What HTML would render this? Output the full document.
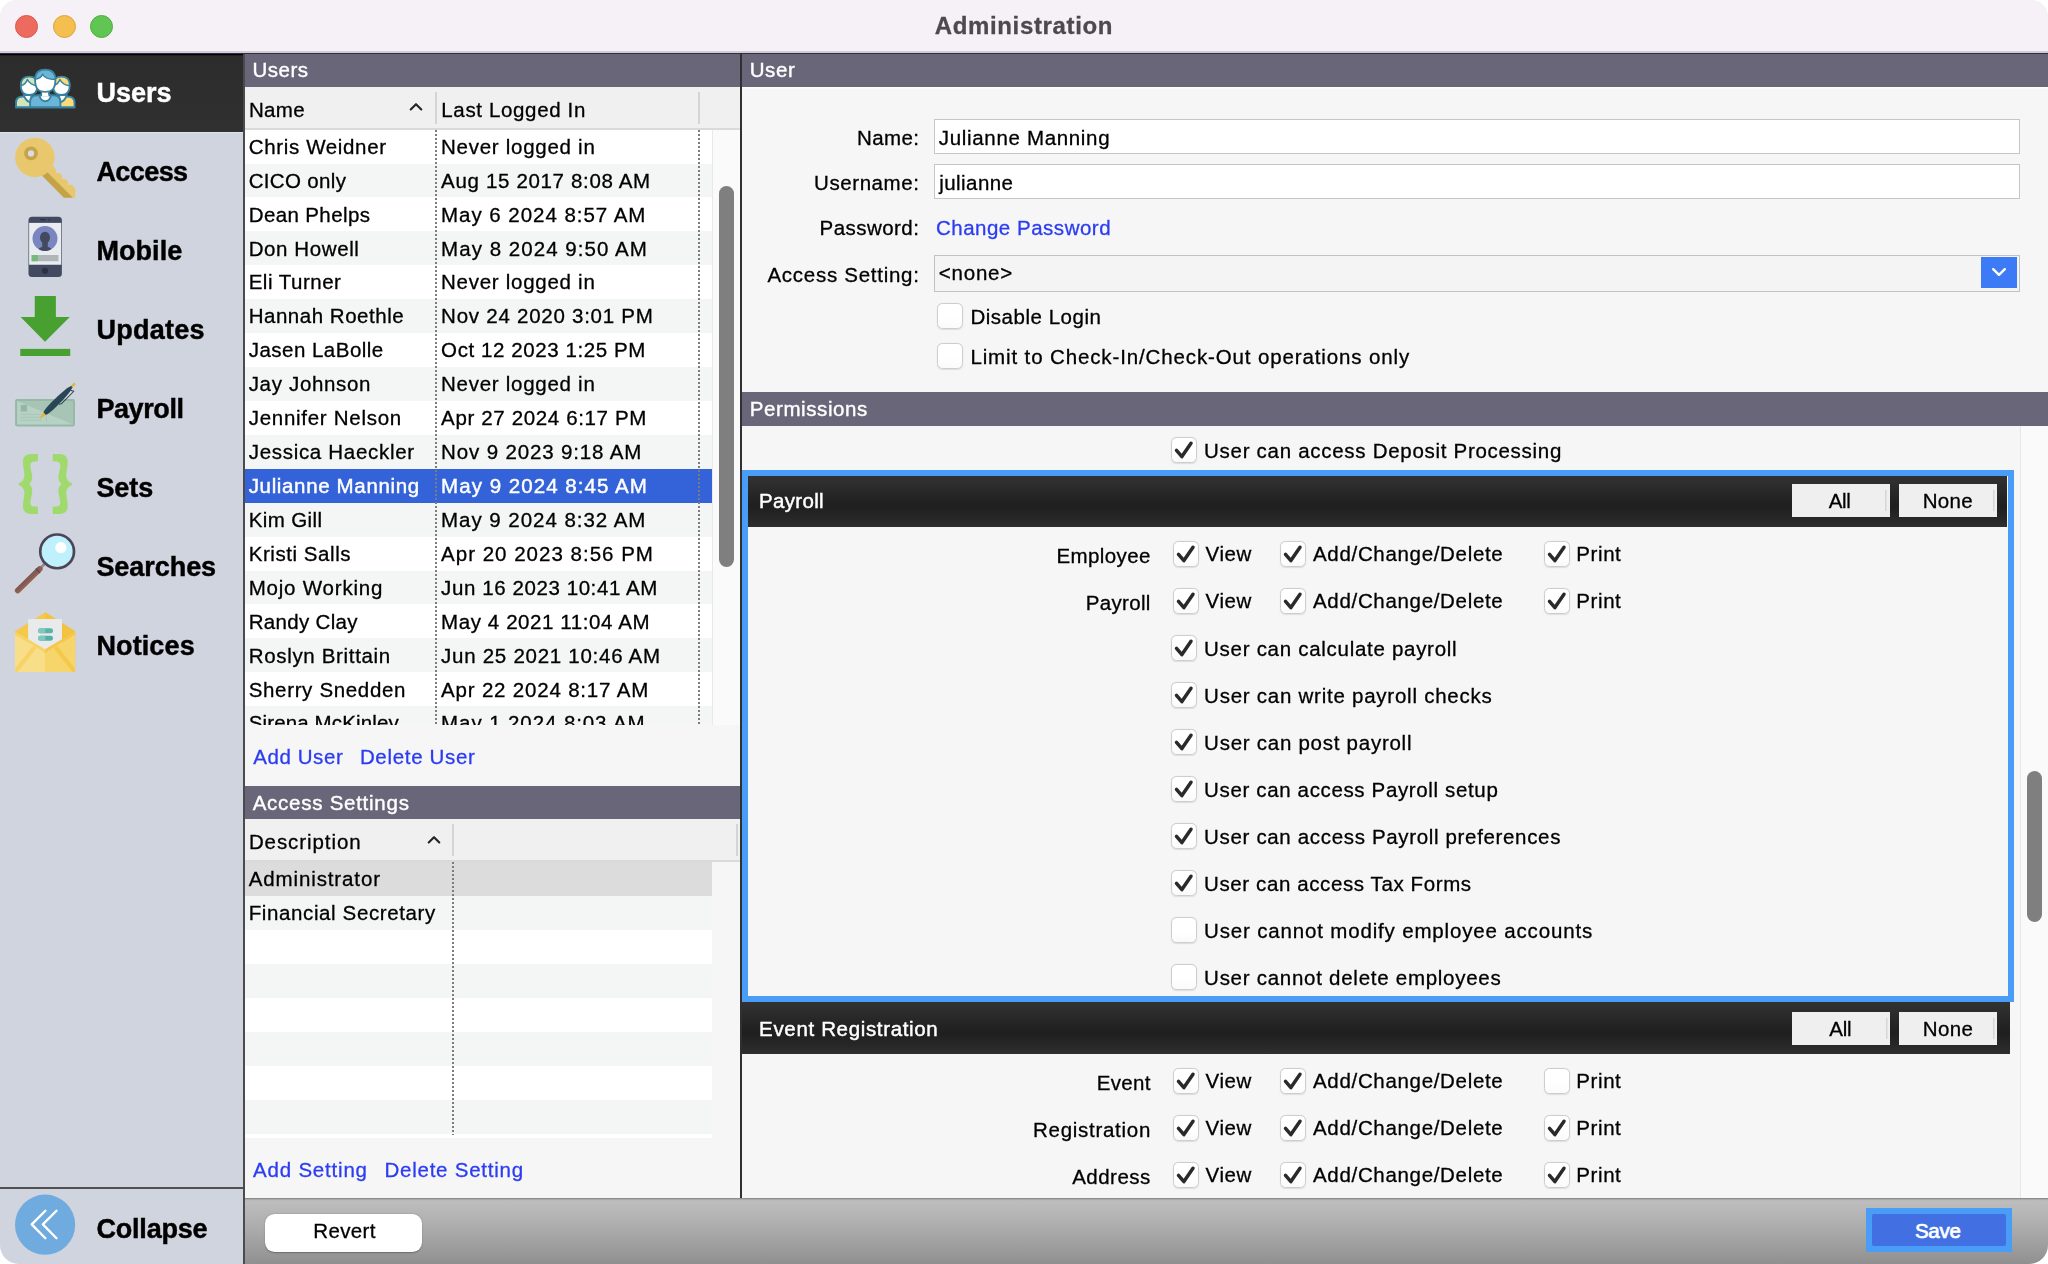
<!DOCTYPE html>
<html lang="en"><head><meta charset="utf-8"><title>Administration</title>
<style>
html,body{margin:0;padding:0;background:#fff;}
body{width:2048px;height:1264px;overflow:hidden;font-family:"Liberation Sans",Arial,sans-serif;color:#000;font-size:20.5px;-webkit-text-stroke:0.3px;}
#win{transform:translateZ(0);position:absolute;left:0;top:0;width:2048px;height:1264px;background:#f6f6f6;border-radius:17px 17px 19px 19px;overflow:hidden;}
#win *{box-sizing:border-box;}
#win div,#win span,#win i,#win b{position:absolute;white-space:nowrap;font-style:normal;}
#titlebar{left:0;top:0;width:2048px;height:53px;background:#f6f1f7;}
.tl{top:14.9px;width:23px;height:23px;border-radius:50%;}
.tl.r{left:15px;background:#ec6a5e;border:1px solid #d8584c;}
.tl.y{left:52.7px;background:#f4bf4f;border:1px solid #dba53e;}
.tl.g{left:90.1px;background:#61c554;border:1px solid #50ad43;}
#title{-webkit-text-stroke:0.3px;top:0;height:52px;line-height:51.5px;font-weight:bold;font-size:24px;color:#4c4a4d;}
#tshadow{left:0;top:50.8px;width:2048px;height:3px;background:linear-gradient(#d3cfd5 0,#d0ccd2 1.8px,#2f2d47 1.9px,#2f2d47 3px);z-index:5;}

#sidebar{left:0;top:53px;width:244.5px;height:1211px;background:#d0d4de;border-right:2px solid #4b4b4e;}
.sbitem{left:0;width:242.5px;height:79px;}
.sbitem.sel{background:linear-gradient(#000 0,#000 2.2px,#2c2c2c 2.6px,#303030 100%);color:#fff;box-shadow:0 1px 0 #dde2ed;}
.sblabel{-webkit-text-stroke:0.45px;top:0;height:79px;line-height:80px;font-weight:bold;font-size:27px;}
.sbitem svg,#collapse svg{position:absolute;}
#sbline{left:0;top:1134px;width:243px;height:1.5px;background:#505052;}
#collapse{left:0;top:1136px;width:242px;height:75px;}
#collapse .sblabel{line-height:81.5px;}

#left{left:245px;top:53px;width:495px;height:1145px;background:#f6f6f6;}
.phdr{left:0;width:100%;height:33.5px;background:#686678;color:#fff;box-shadow:0 1.5px 0 #fdfdfd;}
.phdr span{top:0;line-height:34px;-webkit-text-stroke:0.4px;}
.thead{left:0;width:100%;height:43px;background:#f0f0f0;border-bottom:2px solid #dadada;}
.th{top:0;line-height:45px;}
.hsep{top:5.3px;width:1.8px;height:32px;background:#d4d4d4;}
.thead svg{position:absolute;}
#ulist{left:0;top:77px;width:467px;height:595px;overflow:hidden;background:#fff;}
#alist{left:0;top:809.2px;width:467px;height:275.8px;overflow:hidden;background:#fff;}
.row{left:0;width:467px;height:33.92px;background:#fff;}
.row.alt{background:#f4f5f5;}
.row.sel{background:#3462d8;color:#fff;-webkit-text-stroke:0.45px;}
.row.gsel{background:#dcdcdc;}
.row span{top:0.2px;line-height:33.92px;}
.vdot{top:0;width:2px;height:100%;background-image:linear-gradient(#7c7c7c 50%,rgba(255,255,255,0) 50%);background-size:2px 4px;}
.sbar{left:467px;width:28px;background:#fafafa;border-left:1px solid #e9e9e9;}
.thumb{left:6px;width:15px;border-radius:7.5px;background:#7f7f7f;}
.links{left:0;height:26px;width:100%;color:#2b3cf2;}
.links span{top:0;line-height:26px;}

#vsplit{left:740px;top:53px;width:2px;height:1145px;background:#303030;}

#right{left:742px;top:53px;width:1306px;height:1145px;background:#f6f6f6;}
.frow{left:0;width:100%;height:26px;}
.frow span{top:0;line-height:26px;}
.lnk{color:#2b3cf2;}
.finput{left:192px;width:1085.8px;height:35.4px;background:#fff;border:1.7px solid #c6c6c6;}
.finput span{top:0.9px;line-height:34px;}
.fselect{left:192px;width:1085.8px;height:37px;background:#f4f4f4;border:1.7px solid #c2c2c2;}
.fselect span{top:0.7px;line-height:33px;}
.ddbtn{right:1.6px;top:1.6px;width:36px;height:30.4px;background:#3d7bf6;}
.ddbtn svg{position:absolute;left:7px;top:8px;}
.fcheck{left:195px;height:26px;width:800px;}
.cb{left:0;top:0;width:26px;height:26px;border-radius:5.5px;background:linear-gradient(#fff 55%,#fafafa);border:1.2px solid #cdcdcd;box-shadow:0 0.6px 1.2px rgba(0,0,0,.10);}
.cb svg{position:absolute;left:-1.2px;top:-1.2px;}
.fcheck span{top:0.5px;line-height:26px;}

#perm{left:0;top:373px;width:1278px;height:772px;overflow:hidden;background:#f6f6f6;}
.prow{left:0;width:1278px;height:26px;}
.prow span{top:0;line-height:26px;}
#focus{left:0;top:44px;width:1272px;height:532px;border:6px solid #4a9df6;}
.ghdr{height:51px;background:linear-gradient(#323232 0%,#2e2e2e 14%,#222 48%,#1f1f1f 60%,#282828 85%,#2f2f2f 100%);color:#fff;}
.gt{top:0;-webkit-text-stroke:0.45px;}
.gbtn{top:8.2px;width:98px;height:33.3px;color:#000;background:linear-gradient(#d6d6d6,#d6d6d6) no-repeat right 3px top 6px / 1.5px 21px,#efefef;}
.gbtn span{top:0;line-height:33.4px;}
.sbar.r{background:#fafafa;border-left:1px solid #e7e7e7;}

#bottom{left:245px;top:1198px;width:1803px;height:66px;background:linear-gradient(#7d7d7d 0,#b9b9b9 2px,#bdbdbd 4px,#acacac 45%,#909090 100%);}
#revert{left:20px;top:15.7px;width:157px;height:38.3px;background:#fff;border-radius:9.5px;box-shadow:0 0.5px 1.5px rgba(0,0,0,.3);}
#revert span{top:0;line-height:33.8px;}
#save{left:1621px;top:10.2px;width:145.6px;height:43.8px;background:#4a9df6;}
#save b{left:6.3px;top:6px;width:134px;height:31.8px;background:#4270e2;color:#fff;font-weight:normal;border-radius:2px;-webkit-text-stroke:0.7px;}
#save b span{top:0;line-height:34.2px;}
</style></head><body>
<div id="win">
<div id="titlebar"><i class="tl r"></i><i class="tl y"></i><i class="tl g"></i><span id="title" style="left:934.70px;letter-spacing:0.652px">Administration</span></div>
<div id="tshadow"></div>
<div id="sidebar">
<div class="sbitem sel" style="top:0px"><svg width="96" height="79" viewBox="0 0 768 632" style="left:0;top:0"><g stroke="#38839f" stroke-width="15" stroke-linejoin="round"><path d="M128,434 V398 C128,366 150,348 185,348 H250 V434 Z" fill="#d3e6b9"/><path d="M596,434 V398 C596,366 574,348 539,348 H474 V434 Z" fill="#f9db7c"/><path d="M190,336 L250,336 L250,396 C222,390 198,368 190,336 Z" fill="#fff"/><path d="M534,336 L474,336 L474,396 C502,390 526,368 534,336 Z" fill="#fff"/><path d="M166,262 C166,208 190,189 233,189 C276,189 300,208 300,262 C300,316 276,336 233,336 C190,336 166,316 166,262 Z" fill="#fff"/><path d="M166,262 C166,208 190,189 233,189 C276,189 300,208 300,262 C265,258 232,240 219,212 C210,238 192,256 166,262 Z" fill="#cfe4b7" stroke-width="12"/><path d="M558,262 C558,208 534,189 491,189 C448,189 424,208 424,262 C424,316 448,336 491,336 C534,336 558,316 558,262 Z" fill="#fff"/><path d="M558,262 C558,208 534,189 491,189 C448,189 424,208 424,262 C450,256 470,238 479,212 C492,240 524,258 558,262 Z" fill="#f9db7c" stroke-width="12"/><path d="M241,434 V392 C241,357 265,338 300,338 H424 C459,338 483,357 483,392 V434 Z" fill="#6bb5d9"/><path d="M317,338 C317,366 340,386 362,386 C384,386 407,366 407,338 Z" fill="#fff"/><rect x="336" y="306" width="52" height="40" fill="#fff" stroke="none"/><path d="M331,312 V338 M393,312 V338" fill="none" stroke-width="12"/><path d="M281,218 C281,152 312,134 362,134 C412,134 443,152 443,218 C443,288 415,311 362,311 C309,311 281,288 281,218 Z" fill="#fff"/><path d="M281,210 C283,152 312,134 362,134 C412,134 441,152 443,212 C400,212 356,200 341,170 C331,194 310,206 281,210 Z" fill="#6bb5d9" stroke-width="12"/></g><path d="M121,437 H603" stroke="#38839f" stroke-width="10"/></svg><span class="sblabel" style="left:96.40px;letter-spacing:-0.003px;">Users</span></div>
<div class="sbitem" style="top:79px"><svg width="96" height="79" viewBox="0 0 768 632" style="left:0;top:0"><path d="M422,269 L445,292 L449,328 L481,330 L495,351 L497,376 L531,378 L543,397 L545,421 L574,421 L602,449 L602,525 L584,525 L378,319 Z" fill="#e9c86d"/><path d="M378,319 L584,525 L511,526 L337,349 Z" fill="#c5a345"/><circle cx="279" cy="203" r="158" fill="#e9c86d"/><circle cx="248" cy="171" r="55" fill="#c6a447"/><circle cx="248" cy="171" r="25" fill="#d8dce8"/></svg><span class="sblabel" style="left:96.40px;letter-spacing:-0.567px;">Access</span></div>
<div class="sbitem" style="top:158px"><svg width="96" height="79" viewBox="0 0 768 632" style="left:0;top:0"><rect x="228" y="45" width="267" height="483" rx="28" fill="#434960"/><rect x="233" y="95" width="257" height="335" fill="#e8ecf0"/><rect x="320" y="63" width="46" height="11" rx="5" fill="#2c3143"/><circle cx="393" cy="68" r="7" fill="#2c3143"/><clipPath id="mc"><circle cx="360" cy="220" r="100"/></clipPath><circle cx="360" cy="220" r="100" fill="#7986c0"/><g clip-path="url(#mc)" fill="#434960"><ellipse cx="360" cy="212" rx="40" ry="47"/><rect x="338" y="240" width="44" height="50"/><path d="M290,330 C295,300 320,292 345,285 H375 C400,292 425,300 430,330 Z"/></g><rect x="253" y="352" width="215" height="50" fill="#b0b5b8"/><rect x="253" y="352" width="50" height="50" fill="#76b87a"/><circle cx="360" cy="478" r="25" fill="#2c3143"/></svg><span class="sblabel" style="left:96.40px;letter-spacing:0.069px;">Mobile</span></div>
<div class="sbitem" style="top:237px"><svg width="96" height="79" viewBox="0 0 768 632" style="left:0;top:0"><path d="M278,48 H447 V216 H558 L360,413 L165,216 H278 Z" fill="#48a030"/><rect x="162" y="471" width="400" height="57" fill="#48a030"/></svg><span class="sblabel" style="left:96.40px;letter-spacing:0.281px;">Updates</span></div>
<div class="sbitem" style="top:316px"><svg width="96" height="79" viewBox="0 0 768 632" style="left:0;top:0"><rect x="128.5" y="248" width="463" height="204" rx="9" fill="#b7d2c4" stroke="#94b9a6" stroke-width="16"/><path d="M137,256 H584 V444 Z" fill="#a7c4b4"/><rect x="166" y="288" width="50" height="52" fill="#92b7a4"/><path d="M166,363 H335 M166,386 H335 M166,409 H335" stroke="#a6c5b5" stroke-width="7" fill="none"/><path d="M371,276 V428" stroke="#a3c2b1" stroke-width="6"/><g transform="translate(465,250) rotate(-45)"><path d="M126,12 L140,38 L-2,38 L-18,26" fill="none" stroke="#2a4252" stroke-width="8" stroke-linejoin="round"/><path d="M-153,-13 C-135,-22 -100,-26 -50,-26 C0,-26 60,-25 100,-20 C125,-16 145,-11 156,-8 L156,8 C145,11 125,16 100,20 C60,25 0,26 -50,26 C-100,26 -135,22 -153,13 Z" fill="#2a4656"/><path d="M-153,-13 L-200,-5 Q-211,0 -200,5 L-153,13 Z" fill="#e9b22e"/><rect x="156" y="-9" width="36" height="18" rx="7" fill="#e9b22e"/></g></svg><span class="sblabel" style="left:96.40px;letter-spacing:-0.408px;">Payroll</span></div>
<div class="sbitem" style="top:395px"><svg width="96" height="79" viewBox="0 0 768 632" style="left:0;top:0"><path d="M303,48 H250 C205,48 183,75 183,115 C183,150 195,185 195,215 C195,250 175,275 150,280 V297 C175,302 195,327 195,362 C195,392 183,427 183,462 C183,502 205,528 250,528 H303 V468 H280 C252,468 243,455 243,435 C243,405 258,375 258,345 C258,315 245,298 232,288 C245,278 258,262 258,232 C258,202 243,172 243,142 C243,122 252,108 280,108 H303 Z" fill="#a0da6c"/><path d="M303,48 H250 C205,48 183,75 183,115 C183,150 195,185 195,215 C195,250 175,275 150,280 V297 C175,302 195,327 195,362 C195,392 183,427 183,462 C183,502 205,528 250,528 H303 V468 H280 C252,468 243,455 243,435 C243,405 258,375 258,345 C258,315 245,298 232,288 C245,278 258,262 258,232 C258,202 243,172 243,142 C243,122 252,108 280,108 H303 Z" fill="#a0da6c" transform="translate(725,0) scale(-1,1)"/></svg><span class="sblabel" style="left:96.40px;letter-spacing:-0.090px;">Sets</span></div>
<div class="sbitem" style="top:474px"><svg width="96" height="79" viewBox="0 0 768 632" style="left:0;top:0"><path d="M364,288 L326,326" stroke="#8d8d98" stroke-width="21"/><path d="M318,336 L142,508" stroke="#96604a" stroke-width="46" stroke-linecap="round"/><path d="M311.6,329.6 L135.6,501.6" stroke="#7d5a5b" stroke-width="24" stroke-linecap="round"/><path d="M286,332 L321,369" stroke="#4b4960" stroke-width="10"/><circle cx="457" cy="195" r="135" fill="#bef1fc" stroke="#4c4557" stroke-width="21.5"/><circle cx="487" cy="165" r="45" fill="#fff"/></svg><span class="sblabel" style="left:96.40px;letter-spacing:-0.050px;">Searches</span></div>
<div class="sbitem" style="top:553px"><svg width="96" height="79" viewBox="0 0 768 632" style="left:0;top:0"><path d="M120,202 L362,49 L601,202 V520 Q601,528 593,528 H128 Q120,528 120,520 Z" fill="#f5c74a"/><path d="M362,49 L601,202 V520 Q601,528 593,528 H362 Z" fill="#f3c241"/><rect x="225" y="104" width="271" height="260" rx="10" fill="#e8eaeb"/><rect x="304" y="178" width="120" height="40" rx="20" fill="#5ab3a8"/><path d="M362,178 H324 a20,20 0 0 0 0,40 H362 Z" fill="#80c8bd"/><rect x="304" y="238" width="120" height="39" rx="19.5" fill="#54b0a5"/><path d="M362,238 H323.5 a19.5,19.5 0 0 0 0,39 H362 Z" fill="#80c8bd"/><clipPath id="nf"><path d="M120,202 L361,344 L601,202 V520 Q601,528 593,528 H128 Q120,528 120,520 Z"/></clipPath><g clip-path="url(#nf)"><path d="M120,226 L361,375 V528 H120 Z" fill="#f8de88"/><path d="M601,226 L361,375 V528 H601 Z" fill="#f6d56a"/><path d="M122,526 L280,326" stroke="#f7d366" stroke-width="33"/><path d="M599,526 L442,326" stroke="#f5c84c" stroke-width="33"/><path d="M120,202 L361,344 V375 L120,226 Z" fill="#f7d366"/><path d="M601,202 L361,344 V375 L601,226 Z" fill="#f5c84c"/></g></svg><span class="sblabel" style="left:96.40px;letter-spacing:0.122px;">Notices</span></div>
<div id="sbline"></div>
<div id="collapse"><svg width="96" height="75" viewBox="0 0 384 300" style="left:0;top:0"><circle cx="180.4" cy="142.8" r="120.4" fill="#6fabde"/><path d="M181.6,87 L127,141.2 L181.6,197 M226,87 L171.4,141.2 L226,197" fill="none" stroke="#fff" stroke-width="9.6" stroke-linecap="round" stroke-linejoin="round"/></svg><span class="sblabel" style="left:96.40px;letter-spacing:-0.184px;">Collapse</span></div>
</div>
<div id="left">
<div class="phdr" style="top:0"><span style="left:7.50px;letter-spacing:0.474px;">Users</span></div>
<div class="thead" style="top:34px"><span class="th" style="left:3.90px;letter-spacing:0.322px;">Name</span><svg width="16" height="12" viewBox="0 0 16 12" style="left:163.2px;top:14px"><path d="M2.7,8.5 L8,3.2 L13.3,8.5" fill="none" stroke="#222" stroke-width="2.1" stroke-linecap="round" stroke-linejoin="round"/></svg><i class="hsep" style="left:190px"></i><span class="th" style="left:196.30px;letter-spacing:0.646px;">Last Logged In</span><i class="hsep" style="left:453.4px"></i></div>
<div id="ulist">
<div class="row" style="top:-0.40px"><span style="left:3.70px;letter-spacing:0.654px;">Chris Weidner</span><span style="left:196.10px;letter-spacing:0.721px;">Never logged in</span></div>
<div class="row alt" style="top:33.52px"><span style="left:3.70px;letter-spacing:0.337px;">CICO only</span><span style="left:196.10px;letter-spacing:0.661px;">Aug 15 2017 8:08 AM</span></div>
<div class="row" style="top:67.44px"><span style="left:3.70px;letter-spacing:0.384px;">Dean Phelps</span><span style="left:196.10px;letter-spacing:0.954px;">May 6 2024 8:57 AM</span></div>
<div class="row alt" style="top:101.36px"><span style="left:3.70px;letter-spacing:0.594px;">Don Howell</span><span style="left:196.10px;letter-spacing:1.036px;">May 8 2024 9:50 AM</span></div>
<div class="row" style="top:135.28px"><span style="left:3.70px;letter-spacing:0.496px;">Eli Turner</span><span style="left:196.10px;letter-spacing:0.721px;">Never logged in</span></div>
<div class="row alt" style="top:169.20px"><span style="left:3.70px;letter-spacing:0.522px;">Hannah Roethle</span><span style="left:196.10px;letter-spacing:0.748px;">Nov 24 2020 3:01 PM</span></div>
<div class="row" style="top:203.12px"><span style="left:3.70px;letter-spacing:0.480px;">Jasen LaBolle</span><span style="left:196.10px;letter-spacing:0.588px;">Oct 12 2023 1:25 PM</span></div>
<div class="row alt" style="top:237.04px"><span style="left:3.70px;letter-spacing:0.669px;">Jay Johnson</span><span style="left:196.10px;letter-spacing:0.721px;">Never logged in</span></div>
<div class="row" style="top:270.96px"><span style="left:3.70px;letter-spacing:0.716px;">Jennifer Nelson</span><span style="left:196.10px;letter-spacing:0.637px;">Apr 27 2024 6:17 PM</span></div>
<div class="row alt" style="top:304.88px"><span style="left:3.70px;letter-spacing:0.701px;">Jessica Haeckler</span><span style="left:196.10px;letter-spacing:0.851px;">Nov 9 2023 9:18 AM</span></div>
<div class="row sel" style="top:338.80px"><span style="left:3.70px;letter-spacing:0.652px;">Julianne Manning</span><span style="left:196.10px;letter-spacing:1.036px;">May 9 2024 8:45 AM</span></div>
<div class="row alt" style="top:372.72px"><span style="left:3.70px;letter-spacing:0.382px;">Kim Gill</span><span style="left:196.10px;letter-spacing:0.954px;">May 9 2024 8:32 AM</span></div>
<div class="row" style="top:406.64px"><span style="left:3.70px;letter-spacing:0.560px;">Kristi Salls</span><span style="left:196.10px;letter-spacing:1.004px;">Apr 20 2023 8:56 PM</span></div>
<div class="row alt" style="top:440.56px"><span style="left:3.70px;letter-spacing:0.796px;">Mojo Working</span><span style="left:196.10px;letter-spacing:0.584px;">Jun 16 2023 10:41 AM</span></div>
<div class="row" style="top:474.48px"><span style="left:3.70px;letter-spacing:0.313px;">Randy Clay</span><span style="left:196.10px;letter-spacing:0.587px;">May 4 2021 11:04 AM</span></div>
<div class="row alt" style="top:508.40px"><span style="left:3.70px;letter-spacing:0.670px;">Roslyn Brittain</span><span style="left:196.10px;letter-spacing:0.726px;">Jun 25 2021 10:46 AM</span></div>
<div class="row" style="top:542.32px"><span style="left:3.70px;letter-spacing:0.661px;">Sherry Snedden</span><span style="left:196.10px;letter-spacing:0.806px;">Apr 22 2024 8:17 AM</span></div>
<div class="row alt" style="top:576.24px"><span style="left:3.70px;letter-spacing:0.135px;">Sirena McKinley</span><span style="left:196.10px;letter-spacing:0.907px;">May 1 2024 8:03 AM</span></div>
<i class="vdot" style="left:190px"></i><i class="vdot" style="left:453.2px"></i>
</div>
<div class="sbar" style="top:77px;height:595px"><i class="thumb" style="top:55.7px;height:381px"></i></div>
<div class="links" style="top:691px"><span style="left:8.20px;letter-spacing:0.588px;">Add User</span><span style="left:114.90px;letter-spacing:0.676px;">Delete User</span></div>
<div class="phdr" style="top:732.6px"><span style="left:7.70px;letter-spacing:0.739px;">Access Settings</span></div>
<div class="thead" style="top:766px"><span class="th" style="left:3.90px;letter-spacing:0.920px;">Description</span><svg width="16" height="12" viewBox="0 0 16 12" style="left:180.6px;top:15px"><path d="M2.7,8.5 L8,3.2 L13.3,8.5" fill="none" stroke="#222" stroke-width="2.1" stroke-linecap="round" stroke-linejoin="round"/></svg><i class="hsep" style="left:207px"></i><i class="hsep" style="left:491px"></i></div>
<div id="alist">
<div class="row gsel" style="top:0.00px"><span style="left:3.70px;letter-spacing:0.880px;">Administrator</span></div>
<div class="row alt" style="top:33.92px"><span style="left:3.70px;letter-spacing:0.618px;">Financial Secretary</span></div>
<div class="row" style="top:67.84px"></div>
<div class="row alt" style="top:101.76px"></div>
<div class="row" style="top:135.68px"></div>
<div class="row alt" style="top:169.60px"></div>
<div class="row" style="top:203.52px"></div>
<div class="row alt" style="top:237.44px"></div>
<i class="vdot" style="left:207px;height:273px"></i>
</div>
<div class="links" style="top:1104px"><span style="left:8.00px;letter-spacing:0.802px;">Add Setting</span><span style="left:139.50px;letter-spacing:0.751px;">Delete Setting</span></div>
</div>
<div id="vsplit"></div>
<div id="right">
<div class="phdr" style="top:0"><span style="left:7.70px;letter-spacing:0.615px;">User</span></div>
<div class="frow" style="top:71.9px"><span style="left:115.00px;letter-spacing:0.382px;">Name:</span></div><div class="finput" style="top:66px"><span style="left:3.80px;letter-spacing:0.672px;">Julianne Manning</span></div>
<div class="frow" style="top:116.9px"><span style="left:72.10px;letter-spacing:0.569px;">Username:</span></div><div class="finput" style="top:110.8px"><span style="left:4.31px;letter-spacing:0.424px;">julianne</span></div>
<div class="frow" style="top:162.0px"><span style="left:77.60px;letter-spacing:0.446px;">Password:</span></div><div class="frow" style="top:162px"><span class="lnk" style="left:193.90px;letter-spacing:0.515px;">Change Password</span></div>
<div class="frow" style="top:208.9px"><span style="left:25.40px;letter-spacing:0.732px;">Access Setting:</span></div><div class="fselect" style="top:201.6px"><span style="left:3.80px;letter-spacing:0.781px;">&lt;none&gt;</span><i class="ddbtn"><svg width="22" height="14" viewBox="0 0 22 14"><path d="M5.2 4.2 L11 9.8 L16.8 4.2" fill="none" stroke="#fff" stroke-width="2.4" stroke-linecap="round" stroke-linejoin="round"/></svg></i></div>
<div class="fcheck" style="top:250px"><i class="cb"></i><span style="left:33.40px;letter-spacing:0.523px;">Disable Login</span></div>
<div class="fcheck" style="top:290px"><i class="cb"></i><span style="left:33.40px;letter-spacing:0.871px;">Limit to Check-In/Check-Out operations only</span></div>
<div class="phdr" style="top:339px"><span style="left:7.70px;letter-spacing:0.598px;">Permissions</span></div>
<div id="perm">
<div class="prow" style="top:11.1px"><i class="cb" style="left:429.2px"><svg width="26" height="26" viewBox="0 0 26 26"><path d="M5.5,13.3 L10.9,19.6 L20,6.3" fill="none" stroke="#2a2a2a" stroke-width="3.5" stroke-linecap="round" stroke-linejoin="round"/></svg></i><span style="left:462.10px;letter-spacing:0.708px;top:0.8px;">User can access Deposit Processing</span></div>
<div id="focus"></div>
<div class="ghdr" style="top:50px;left:6px;width:1259px"><span class="gt" style="left:11.10px;letter-spacing:0.312px;line-height:49.5px;">Payroll</span><i class="gbtn" style="left:1043.7px"><span style="left:37.00px;letter-spacing:-0.277px;">All</span></i><i class="gbtn" style="left:1151.3px"><span style="left:23.40px;letter-spacing:0.335px;">None</span></i></div>
<div class="prow" style="top:115.4px"><span style="left:314.40px;letter-spacing:0.397px;top:1.6px;">Employee</span><i class="cb" style="left:431.2px"><svg width="26" height="26" viewBox="0 0 26 26"><path d="M5.5,13.3 L10.9,19.6 L20,6.3" fill="none" stroke="#2a2a2a" stroke-width="3.5" stroke-linecap="round" stroke-linejoin="round"/></svg></i><span style="left:463.60px;letter-spacing:0.575px;top:-0.3px;">View</span><i class="cb" style="left:538.0px"><svg width="26" height="26" viewBox="0 0 26 26"><path d="M5.5,13.3 L10.9,19.6 L20,6.3" fill="none" stroke="#2a2a2a" stroke-width="3.5" stroke-linecap="round" stroke-linejoin="round"/></svg></i><span style="left:571.00px;letter-spacing:0.677px;top:-0.3px;">Add/Change/Delete</span><i class="cb" style="left:801.8px"><svg width="26" height="26" viewBox="0 0 26 26"><path d="M5.5,13.3 L10.9,19.6 L20,6.3" fill="none" stroke="#2a2a2a" stroke-width="3.5" stroke-linecap="round" stroke-linejoin="round"/></svg></i><span style="left:834.30px;letter-spacing:0.593px;top:-0.3px;">Print</span></div>
<div class="prow" style="top:162.4px"><span style="left:343.80px;letter-spacing:0.312px;top:1.6px;">Payroll</span><i class="cb" style="left:431.2px"><svg width="26" height="26" viewBox="0 0 26 26"><path d="M5.5,13.3 L10.9,19.6 L20,6.3" fill="none" stroke="#2a2a2a" stroke-width="3.5" stroke-linecap="round" stroke-linejoin="round"/></svg></i><span style="left:463.60px;letter-spacing:0.575px;top:-0.3px;">View</span><i class="cb" style="left:538.0px"><svg width="26" height="26" viewBox="0 0 26 26"><path d="M5.5,13.3 L10.9,19.6 L20,6.3" fill="none" stroke="#2a2a2a" stroke-width="3.5" stroke-linecap="round" stroke-linejoin="round"/></svg></i><span style="left:571.00px;letter-spacing:0.677px;top:-0.3px;">Add/Change/Delete</span><i class="cb" style="left:801.8px"><svg width="26" height="26" viewBox="0 0 26 26"><path d="M5.5,13.3 L10.9,19.6 L20,6.3" fill="none" stroke="#2a2a2a" stroke-width="3.5" stroke-linecap="round" stroke-linejoin="round"/></svg></i><span style="left:834.30px;letter-spacing:0.593px;top:-0.3px;">Print</span></div>
<div class="prow" style="top:209.1px"><i class="cb" style="left:429.2px"><svg width="26" height="26" viewBox="0 0 26 26"><path d="M5.5,13.3 L10.9,19.6 L20,6.3" fill="none" stroke="#2a2a2a" stroke-width="3.5" stroke-linecap="round" stroke-linejoin="round"/></svg></i><span style="left:462.10px;letter-spacing:0.711px;top:0.8px;">User can calculate payroll</span></div>
<div class="prow" style="top:256.1px"><i class="cb" style="left:429.2px"><svg width="26" height="26" viewBox="0 0 26 26"><path d="M5.5,13.3 L10.9,19.6 L20,6.3" fill="none" stroke="#2a2a2a" stroke-width="3.5" stroke-linecap="round" stroke-linejoin="round"/></svg></i><span style="left:462.10px;letter-spacing:0.750px;top:0.8px;">User can write payroll checks</span></div>
<div class="prow" style="top:303.1px"><i class="cb" style="left:429.2px"><svg width="26" height="26" viewBox="0 0 26 26"><path d="M5.5,13.3 L10.9,19.6 L20,6.3" fill="none" stroke="#2a2a2a" stroke-width="3.5" stroke-linecap="round" stroke-linejoin="round"/></svg></i><span style="left:462.10px;letter-spacing:0.740px;top:0.8px;">User can post payroll</span></div>
<div class="prow" style="top:350.1px"><i class="cb" style="left:429.2px"><svg width="26" height="26" viewBox="0 0 26 26"><path d="M5.5,13.3 L10.9,19.6 L20,6.3" fill="none" stroke="#2a2a2a" stroke-width="3.5" stroke-linecap="round" stroke-linejoin="round"/></svg></i><span style="left:462.10px;letter-spacing:0.642px;top:0.8px;">User can access Payroll setup</span></div>
<div class="prow" style="top:397.1px"><i class="cb" style="left:429.2px"><svg width="26" height="26" viewBox="0 0 26 26"><path d="M5.5,13.3 L10.9,19.6 L20,6.3" fill="none" stroke="#2a2a2a" stroke-width="3.5" stroke-linecap="round" stroke-linejoin="round"/></svg></i><span style="left:462.10px;letter-spacing:0.661px;top:0.8px;">User can access Payroll preferences</span></div>
<div class="prow" style="top:444.1px"><i class="cb" style="left:429.2px"><svg width="26" height="26" viewBox="0 0 26 26"><path d="M5.5,13.3 L10.9,19.6 L20,6.3" fill="none" stroke="#2a2a2a" stroke-width="3.5" stroke-linecap="round" stroke-linejoin="round"/></svg></i><span style="left:462.10px;letter-spacing:0.602px;top:0.8px;">User can access Tax Forms</span></div>
<div class="prow" style="top:491.1px"><i class="cb" style="left:429.2px"></i><span style="left:462.10px;letter-spacing:0.833px;top:0.8px;">User cannot modify employee accounts</span></div>
<div class="prow" style="top:538.1px"><i class="cb" style="left:429.2px"></i><span style="left:462.10px;letter-spacing:0.731px;top:0.8px;">User cannot delete employees</span></div>
<div class="ghdr" style="top:576px;left:0;width:1268px;height:52px"><span class="gt" style="left:17.10px;letter-spacing:0.654px;line-height:53.5px;">Event Registration</span><i class="gbtn" style="left:1050.3px;top:9.9px"><span style="left:37.00px;letter-spacing:-0.277px;">All</span></i><i class="gbtn" style="left:1157.4px;top:9.9px"><span style="left:23.40px;letter-spacing:0.335px;">None</span></i></div>
<div class="prow" style="top:642.4px"><span style="left:354.70px;letter-spacing:0.306px;top:1.6px;">Event</span><i class="cb" style="left:431.2px"><svg width="26" height="26" viewBox="0 0 26 26"><path d="M5.5,13.3 L10.9,19.6 L20,6.3" fill="none" stroke="#2a2a2a" stroke-width="3.5" stroke-linecap="round" stroke-linejoin="round"/></svg></i><span style="left:463.60px;letter-spacing:0.575px;top:-0.3px;">View</span><i class="cb" style="left:538.0px"><svg width="26" height="26" viewBox="0 0 26 26"><path d="M5.5,13.3 L10.9,19.6 L20,6.3" fill="none" stroke="#2a2a2a" stroke-width="3.5" stroke-linecap="round" stroke-linejoin="round"/></svg></i><span style="left:571.00px;letter-spacing:0.677px;top:-0.3px;">Add/Change/Delete</span><i class="cb" style="left:801.8px"></i><span style="left:834.30px;letter-spacing:0.593px;top:-0.3px;">Print</span></div>
<div class="prow" style="top:689.4px"><span style="left:291.10px;letter-spacing:0.712px;top:1.6px;">Registration</span><i class="cb" style="left:431.2px"><svg width="26" height="26" viewBox="0 0 26 26"><path d="M5.5,13.3 L10.9,19.6 L20,6.3" fill="none" stroke="#2a2a2a" stroke-width="3.5" stroke-linecap="round" stroke-linejoin="round"/></svg></i><span style="left:463.60px;letter-spacing:0.575px;top:-0.3px;">View</span><i class="cb" style="left:538.0px"><svg width="26" height="26" viewBox="0 0 26 26"><path d="M5.5,13.3 L10.9,19.6 L20,6.3" fill="none" stroke="#2a2a2a" stroke-width="3.5" stroke-linecap="round" stroke-linejoin="round"/></svg></i><span style="left:571.00px;letter-spacing:0.677px;top:-0.3px;">Add/Change/Delete</span><i class="cb" style="left:801.8px"><svg width="26" height="26" viewBox="0 0 26 26"><path d="M5.5,13.3 L10.9,19.6 L20,6.3" fill="none" stroke="#2a2a2a" stroke-width="3.5" stroke-linecap="round" stroke-linejoin="round"/></svg></i><span style="left:834.30px;letter-spacing:0.593px;top:-0.3px;">Print</span></div>
<div class="prow" style="top:736.4px"><span style="left:330.20px;letter-spacing:0.477px;top:1.6px;">Address</span><i class="cb" style="left:431.2px"><svg width="26" height="26" viewBox="0 0 26 26"><path d="M5.5,13.3 L10.9,19.6 L20,6.3" fill="none" stroke="#2a2a2a" stroke-width="3.5" stroke-linecap="round" stroke-linejoin="round"/></svg></i><span style="left:463.60px;letter-spacing:0.575px;top:-0.3px;">View</span><i class="cb" style="left:538.0px"><svg width="26" height="26" viewBox="0 0 26 26"><path d="M5.5,13.3 L10.9,19.6 L20,6.3" fill="none" stroke="#2a2a2a" stroke-width="3.5" stroke-linecap="round" stroke-linejoin="round"/></svg></i><span style="left:571.00px;letter-spacing:0.677px;top:-0.3px;">Add/Change/Delete</span><i class="cb" style="left:801.8px"><svg width="26" height="26" viewBox="0 0 26 26"><path d="M5.5,13.3 L10.9,19.6 L20,6.3" fill="none" stroke="#2a2a2a" stroke-width="3.5" stroke-linecap="round" stroke-linejoin="round"/></svg></i><span style="left:834.30px;letter-spacing:0.593px;top:-0.3px;">Print</span></div>
</div>
<div class="sbar r" style="top:373px;left:1278px;width:28px;height:772px"><i class="thumb" style="top:345px;height:151px;left:6.2px;width:15px;border-radius:7.5px"></i></div>
</div>
<div id="bottom"><i id="revert"><span style="left:48.25px;letter-spacing:0.376px;">Revert</span></i><i id="save"><b><span style="left:42.60px;letter-spacing:-0.280px;">Save</span></b></i></div>
</div>
</body></html>
